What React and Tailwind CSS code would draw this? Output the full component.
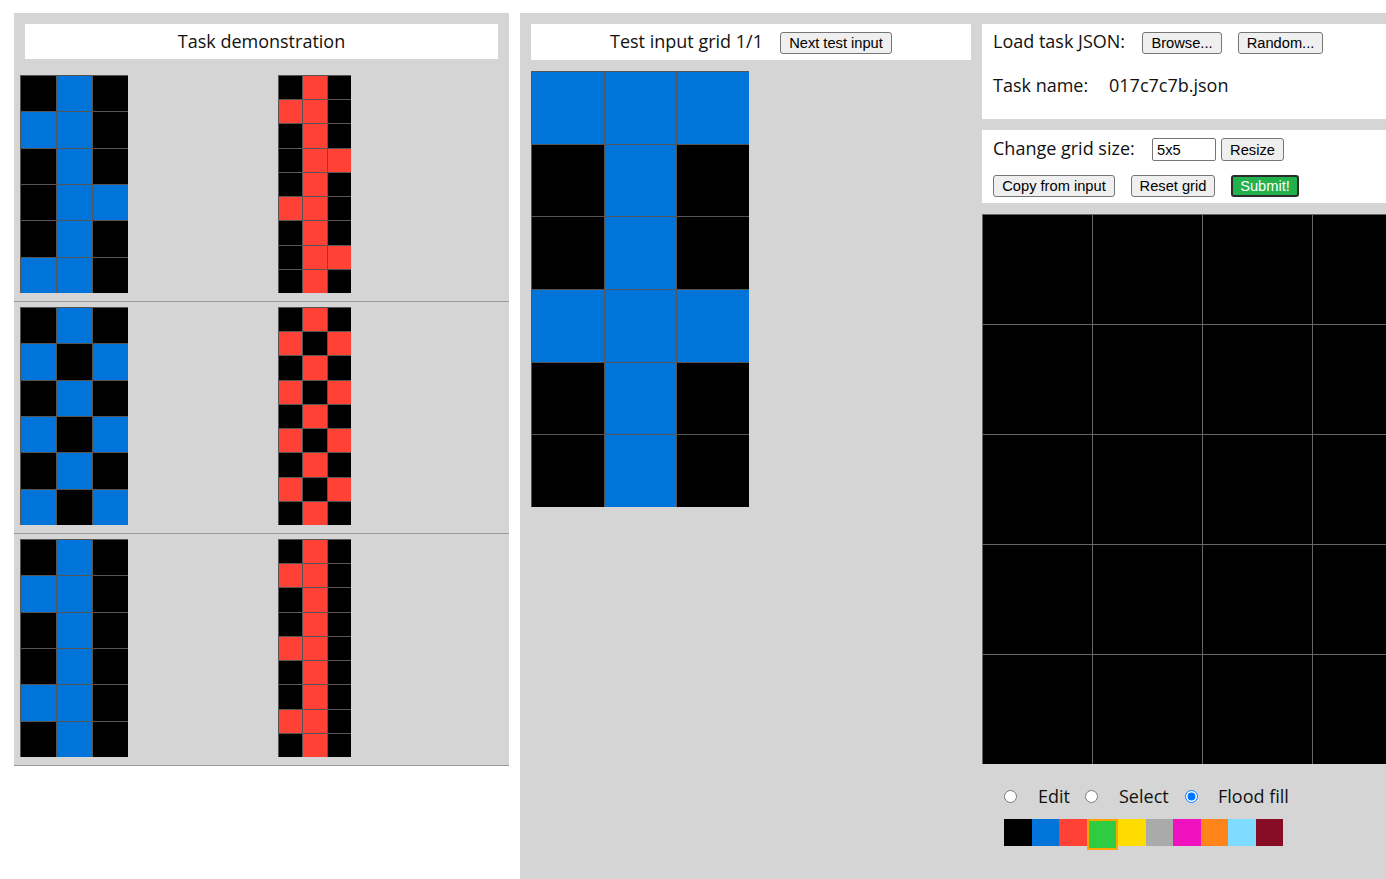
import React from "react";

const BG = {
  0: "bg-[#000000]",
  1: "bg-[#0074D9]",
  2: "bg-[#FF4136]",
  3: "bg-[#2ECC40]",
  4: "bg-[#FFDC00]",
  5: "bg-[#AAAAAA]",
  6: "bg-[#F012BE]",
  7: "bg-[#FF851B]",
  8: "bg-[#7FDBFF]",
  9: "bg-[#870C25]",
};

const pairs = [
  {
    input: ["010", "110", "010", "011", "010", "110"],
    output: ["020", "220", "020", "022", "020", "220", "020", "022", "020"],
  },
  {
    input: ["010", "101", "010", "101", "010", "101"],
    output: ["020", "202", "020", "202", "020", "202", "020", "202", "020"],
  },
  {
    input: ["010", "110", "010", "010", "110", "010"],
    output: ["020", "220", "020", "020", "220", "020", "020", "220", "020"],
  },
];

const testInput = ["111", "010", "010", "111", "010", "010"];
const outputGrid = ["00000", "00000", "00000", "00000", "00000"];

function Grid({ rows, className, border = "border-[#555555]" }) {
  return (
    <div className={className}>
      {rows.map((r, i) =>
        r.split("").map((c, j) => (
          <div key={i + "-" + j} className={`border-l border-t ${border} ${BG[c]}`} />
        ))
      )}
    </div>
  );
}

const btn =
  "h-[22px] bg-[#efefef] border border-[#767676] rounded-[3px] text-[14.67px] text-black font-['Liberation_Sans',Arial,sans-serif] flex items-center justify-center leading-none";

const sans = "font-['Open_Sans','Noto_Sans',sans-serif]";

const palette = [0, 1, 2, 3, 4, 5, 6, 7, 8, 9];

export default function App() {
  return (
    <div className={`w-[1386px] h-[879px] overflow-hidden bg-white flex items-start pt-[13px] pl-[14px] gap-[11px] text-[18px] text-[#111] ${sans}`}>
      {/* Left: demonstration */}
      <div className="w-[495px] shrink-0 bg-[#d5d5d5] pt-[11px]">
        <div className="mx-[11px] h-[35px] bg-white mb-[11px] flex justify-center pt-[8px]">
          <span className="leading-[18px]">Task demonstration</span>
        </div>
        {pairs.map((p, i) => (
          <div key={i} className="flex pl-[6px] pt-[5px] pb-[8px] border-b border-[#999999]">
            <Grid rows={p.input} className="grid grid-cols-3 grid-rows-6 w-[108px] h-[218px]" />
            <Grid rows={p.output} className="ml-[150px] grid grid-cols-3 grid-rows-9 w-[73px] h-[218px]" />
          </div>
        ))}
      </div>

      {/* Right: evaluation */}
      <div className="flex-1 h-[866px] bg-[#d5d5d5] p-[11px] flex gap-[11px] overflow-hidden">
        {/* Test input */}
        <div className="w-[440px] shrink-0 flex flex-col">
          <div className="h-[36px] bg-white flex justify-center items-baseline gap-[17px] pt-[8px]">
            <span className="leading-[18px]">Test input grid 1/1</span>
            <button className={`${btn} w-[112px]`}>Next test input</button>
          </div>
          <Grid rows={testInput} className="mt-[11px] grid grid-cols-3 grid-rows-6 w-[218px] h-[436px]" />
        </div>

        {/* Output editor */}
        <div className="w-[550px] shrink-0 flex flex-col">
          <div className="h-[95px] bg-white px-[11px] pt-[8px]">
            <div className="flex items-baseline">
              <span className="w-[149px] leading-[18px]">Load task JSON:</span>
              <button className={`${btn} w-[80px]`}>Browse...</button>
              <button className={`${btn} w-[85px] ml-[16px]`}>Random...</button>
            </div>
            <div className="flex mt-[22px] leading-[18px]">
              <span className="w-[116px]">Task name:</span>
              <span>017c7c7b.json</span>
            </div>
          </div>

          <div className="h-[73px] bg-white px-[11px] pt-[8px] mt-[11px]">
            <div className="flex items-baseline">
              <span className="w-[159px] leading-[18px]">Change grid size:</span>
              <input
                readOnly
                value="5x5"
                className="w-[64px] h-[23px] bg-white border border-[#767676] rounded-[2px] px-[4px] text-[14.67px] text-black font-['Liberation_Sans',Arial,sans-serif] outline-none"
              />
              <button className={`${btn} !h-[23px] w-[63px] ml-[5px]`}>Resize</button>
            </div>
            <div className="flex mt-[14px]">
              <button className={`${btn} w-[122px]`}>Copy from input</button>
              <button className={`${btn} w-[84px] ml-[16px]`}>Reset grid</button>
              <button className={`${btn} w-[68px] ml-[16px] !bg-[#22b14c] !text-white !border-2 !border-[#2b2b2b]`}>Submit!</button>
            </div>
          </div>

          <Grid
            rows={outputGrid}
            border="border-[#666666]"
            className="mt-[11px] grid grid-cols-5 grid-rows-5 w-[550px] h-[550px] shrink-0"
          />

          <div className="flex items-center h-[18px] mt-[23px] pl-[22px]">
            <input type="radio" name="mode" readOnly className="m-0 w-[13px] h-[13px]" />
            <span className="ml-[21px] w-[47px] leading-[18px]">Edit</span>
            <input type="radio" name="mode" readOnly className="m-0 w-[13px] h-[13px]" />
            <span className="ml-[21px] w-[66px] leading-[18px]">Select</span>
            <input type="radio" name="mode" readOnly defaultChecked className="m-0 w-[13px] h-[13px]" />
            <span className="ml-[20px] leading-[18px]">Flood fill</span>
          </div>

          <div className="flex items-start mt-[14px] pl-[22px]">
            {palette.map((c) =>
              c === 3 ? (
                <div key={c} className={`box-content w-[27.5px] h-[27px] border-2 border-[#FFA500] ${BG[c]}`} />
              ) : (
                <div key={c} className={`w-[27.5px] h-[27px] ${BG[c]}`} />
              )
            )}
          </div>
        </div>
      </div>
    </div>
  );
}
